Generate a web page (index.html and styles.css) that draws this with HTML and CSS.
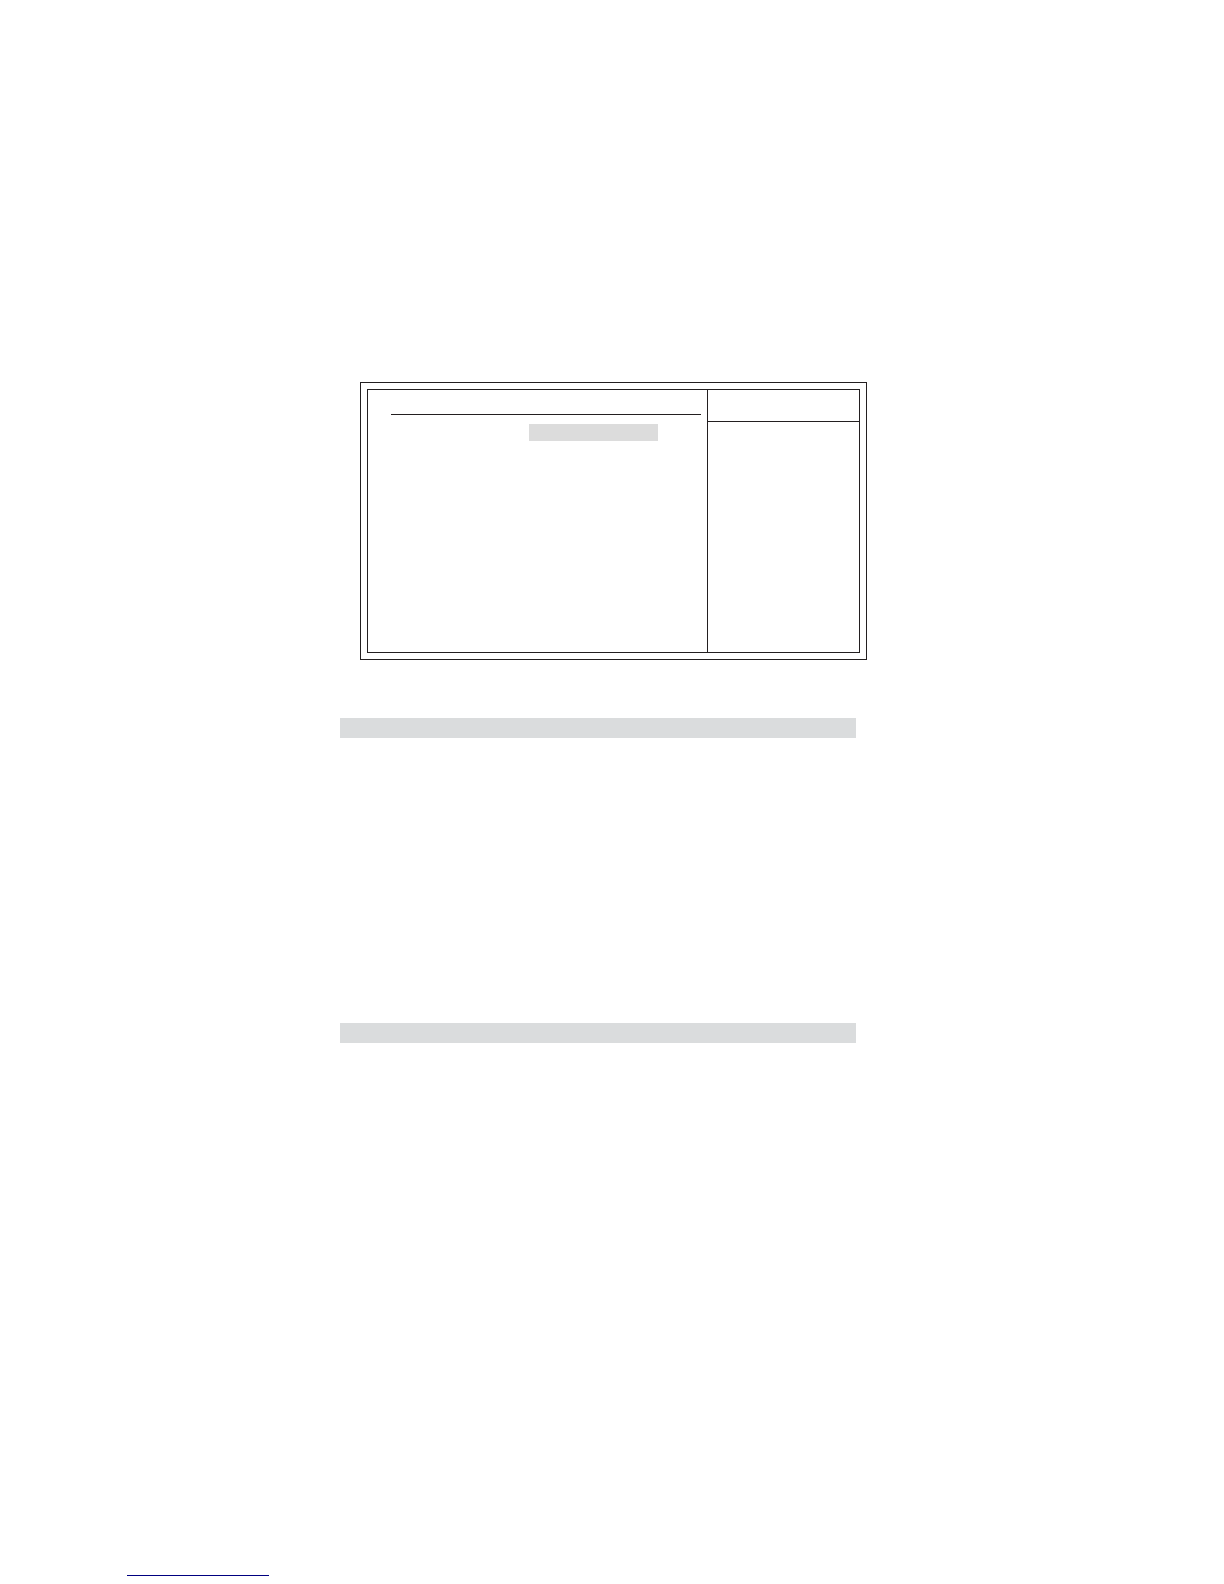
FILE: index.html
```html
<!DOCTYPE html>
<html lang="en">
<head>
    <meta charset="UTF-8">
    <meta name="viewport" content="width=device-width, initial-scale=1.0">
    <link rel="stylesheet" href="styles.css">
</head>
<body>
    <main class="content">
        <section class="screen">
            <div class="screen-inner">
                <div class="settings">
                    <div class="settings-head"></div>
                    <div class="selected"></div>
                </div>
                <aside class="help">
                    <div class="help-head"></div>
                </aside>
            </div>
        </section>
        <div class="bar"></div>
        <div class="bar"></div>
    </main>
    <footer class="footer">
        <a class="footer-link" href="#"></a>
    </footer>
</body>
</html>
```

FILE: styles.css
```css
* {
    box-sizing: border-box;
}
body {
    margin: 0;
    min-height: 100vh;
    display: flex;
    flex-direction: column;
    font-family: "Liberation Sans", Arial, sans-serif;
    background-color: white;
    color: #231f20;
}
.content {
    flex: 1;
    padding: 382px 357px 0 340px;
}

/* double frame */
.screen {
    margin: 0 0 58px 20px;
    padding: 6px;
    border: 1px solid #231f20;
}
.screen-inner {
    display: flex;
    min-height: 264px;
    border: 1px solid #231f20;
}
.settings {
    flex: 1;
    padding: 0 6px 0 23px;
}
.settings-head {
    height: 25px;
    border-bottom: 1px solid #231f20;
}
.selected {
    height: 17px;
    margin: 9px 43px 0 138px;
    background-color: #dcdcdc;
}
.help {
    width: 152px;
    border-left: 1px solid #231f20;
}
.help-head {
    height: 32px;
    border-bottom: 1px solid #231f20;
}

/* grey heading bars */
.bar {
    height: 20px;
    margin-right: 11px;
    background-color: #dadcdd;
}
.bar + .bar {
    margin-top: 285px;
}

.footer {
    padding: 0 127px 8px;
}
.footer-link {
    display: block;
    width: 142px;
    border-bottom: 1px solid #000080;
}
```
